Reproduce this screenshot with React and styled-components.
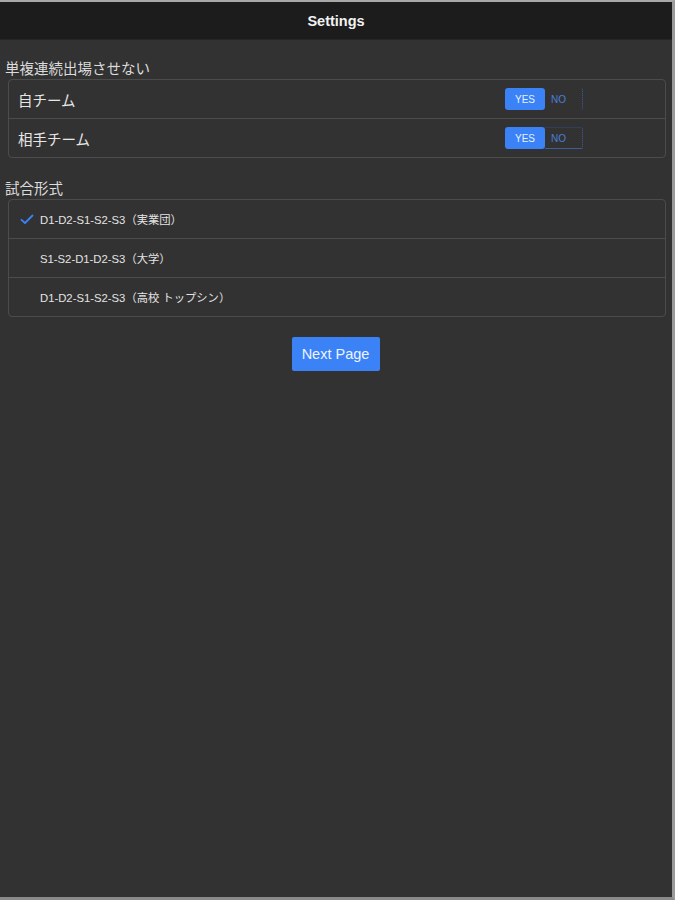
import React from "react";
import styled, { createGlobalStyle } from "styled-components";

const Global = createGlobalStyle`
  html, body { margin: 0; padding: 0; background: #323232; }
  body { font-family: "Noto Sans CJK JP", "Liberation Sans", sans-serif; }
`;

const Frame = styled.div`
  width: 675px;
  height: 900px;
  box-sizing: border-box;
  border-top: 2px solid #a8a8a8;
  border-right: 3px solid #9a9a9a;
  border-bottom: 3px solid #8a8a8a;
  background: #323232;
  display: flex;
  flex-direction: column;
`;

const Header = styled.div`
  height: 37px;
  background: #1c1c1c;
  border-bottom: 1px solid #262626;
  display: flex;
  align-items: center;
  justify-content: center;
  color: #f2f2f2;
  font-family: "Liberation Sans", sans-serif;
  font-size: 14.5px;
  font-weight: 600;
`;

const Content = styled.div`
  padding: 19px 6px 0 5px;
  display: flex;
  flex-direction: column;
`;

const SectionLabel = styled.div`
  color: #dcdcdc;
  font-size: 14.5px;
  line-height: 18px;
  margin-bottom: 2px;
  margin-top: ${(p) => p.$top || 0}px;
`;

const Group = styled.div`
  margin-left: 3px;
  border: 1px solid #4c4c4c;
  border-radius: 4px;
  display: flex;
  flex-direction: column;
`;

const Row = styled.div`
  height: 38px;
  display: flex;
  align-items: center;
  padding-left: ${(p) => p.$pl || 9}px;
  padding-right: 82px;
  border-top: ${(p) => (p.$first ? "none" : "1px solid #4c4c4c")};
  color: #e6e6e6;
  font-size: ${(p) => p.$fs || 14.5}px;
`;

const RowLabel = styled.div`
  flex: 1;
`;

const Segment = styled.div`
  display: flex;
  height: 22px;
`;

const SegBtn = styled.div`
  width: ${(p) => p.$w}px;
  box-sizing: border-box;
  display: flex;
  align-items: center;
  padding-left: ${(p) => (p.$active ? 0 : 6)}px;
  justify-content: ${(p) => (p.$active ? "center" : "flex-start")};
  font-family: "Liberation Sans", sans-serif;
  font-size: 10px;
  border-radius: ${(p) => (p.$active ? "3px" : "0 2px 2px 0")};
  background: ${(p) => (p.$active ? "#3a82f6" : "transparent")};
  color: ${(p) => (p.$active ? "#e8f0ff" : "#4a7ed6")};
  border-right: ${(p) => (p.$active ? "none" : "1px dotted #3d5f99")};
  border-bottom: ${(p) => (p.$line ? "1px solid #3d5f99" : "none")};
  border-top: ${(p) => (p.$line ? "1px solid #2f3f5a" : "none")};
`;

const Check = styled.div`
  width: 20px;
  display: flex;
  align-items: center;
`;

const Option = styled.div`
  font-family: "Liberation Sans", "Noto Sans CJK JP", sans-serif;
  font-size: 11.3px;
  color: #e4e4e4;
`;

const ButtonRow = styled.div`
  display: flex;
  justify-content: center;
  margin-top: 20px;
`;

const Button = styled.button`
  width: 88px;
  height: 34px;
  border: none;
  border-radius: 2px;
  background: #3a82f6;
  color: #eef4ff;
  font-family: "Liberation Sans", sans-serif;
  font-size: 14.5px;
  padding: 0;
`;

const Toggle = ({ line }) => (
  <Segment>
    <SegBtn $active $w={40}>YES</SegBtn>
    <SegBtn $w={38} $line={line}>NO</SegBtn>
  </Segment>
);

const CheckIcon = () => (
  <svg width="14" height="11" viewBox="0 0 14 11">
    <path d="M1.5 5.8 L5 9 L12.5 1.5" fill="none" stroke="#3a82f6" strokeWidth="1.8" strokeLinecap="round" strokeLinejoin="round" />
  </svg>
);

const options = [
  { text: "D1-D2-S1-S2-S3（実業団）", checked: true },
  { text: "S1-S2-D1-D2-S3（大学）" },
  { text: "D1-D2-S1-S2-S3（高校 トップシン）" },
];

export default function App() {
  return (
    <>
      <Global />
      <Frame>
        <Header>Settings</Header>
        <Content>
          <SectionLabel>単複連続出場させない</SectionLabel>
          <Group>
            <Row $first>
              <RowLabel>自チーム</RowLabel>
              <Toggle />
            </Row>
            <Row>
              <RowLabel>相手チーム</RowLabel>
              <Toggle line />
            </Row>
          </Group>
          <SectionLabel $top={21}>試合形式</SectionLabel>
          <Group>
            {options.map((o, i) => (
              <Row key={i} $first={i === 0} $pl={11} $fs={11}>
                <Check>{o.checked && <CheckIcon />}</Check>
                <Option>{o.text}</Option>
              </Row>
            ))}
          </Group>
          <ButtonRow>
            <Button>Next Page</Button>
          </ButtonRow>
        </Content>
      </Frame>
    </>
  );
}
